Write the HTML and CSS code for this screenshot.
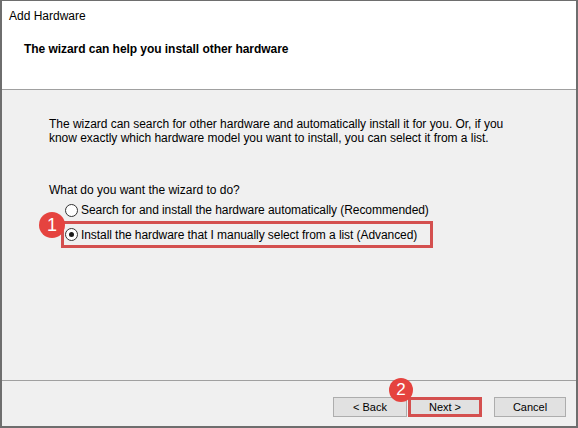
FILE: index.html
```html
<!DOCTYPE html>
<html lang="en">
<head>
    <meta charset="UTF-8">
    <meta name="viewport" content="width=device-width, initial-scale=1.0">
    <title>Add Hardware</title>
    <link rel="stylesheet" href="styles.css">
</head>
<body>
    <div class="window">
        <div class="header">
            <div class="caption">Add Hardware</div>
            <div class="heading">The wizard can help you install other hardware</div>
        </div>
        <div class="content">
            <p class="intro">The wizard can search for other hardware and automatically install it for you. Or, if you<br>know exactly which hardware model you want to install, you can select it from a list.</p>
            <p class="question">What do you want the wizard to do?</p>
            <div class="options">
                <div class="option"><span class="radio"></span>Search for and install the hardware automatically (Recommended)</div>
                <div class="option marked"><span class="radio checked"></span>Install the hardware that I manually select from a list (Advanced)<span class="badge one">1</span></div>
            </div>
        </div>
        <div class="footer">
            <button class="btn">&lt; Back</button>
            <button class="btn next">Next &gt;<span class="badge two">2</span></button>
            <button class="btn cancel">Cancel</button>
        </div>
    </div>
</body>
</html>
```

FILE: styles.css
```css
body {
    margin: 0;
    font-family: "Liberation Sans", Arial, sans-serif;
    font-size: 12px;
    color: #000;
}
.window {
    width: 578px;
    height: 428px;
    box-sizing: border-box;
    border: 2px solid #6e6e6e;
    border-top-width: 1px;
    background: #f0f0f0;
    display: flex;
    flex-direction: column;
}
.header {
    height: 89px;
    box-sizing: border-box;
    background: #fff;
    border-bottom: 1px solid #a0a0a0;
    padding: 7px 0 0 7px;
}
.caption {
    line-height: 16px;
}
.heading {
    font-weight: bold;
    line-height: 16px;
    letter-spacing: -0.05px;
    margin: 17px 0 0 15px;
}
.content {
    flex: 1;
    padding: 27px 0 0 47px;
}
.intro, .question {
    margin: 0;
    line-height: 14px;
}
.intro {
    letter-spacing: -0.03px;
}
.question {
    margin-top: 38px;
}
.options {
    margin-top: 2px;
}
.option {
    display: flex;
    align-items: center;
    width: fit-content;
    height: 22px;
    box-sizing: border-box;
    margin-left: 12px;
    border: 3px solid transparent;
    padding: 0 13px 0 1px;
    letter-spacing: -0.07px;
}
.option.marked {
    height: 27px;
    border-color: #d4504f;
    position: relative;
}
.radio {
    flex: none;
    width: 13px;
    height: 13px;
    box-sizing: border-box;
    border: 1px solid #333;
    border-radius: 50%;
    background: #fff;
    margin-right: 3px;
    position: relative;
}
.radio.checked::after {
    content: "";
    position: absolute;
    left: 3px;
    top: 3px;
    width: 5px;
    height: 5px;
    border-radius: 50%;
    background: #1a1a1a;
}
.badge {
    position: absolute;
    border-radius: 50%;
    background: #e5433f;
    color: #fff;
    text-align: center;
    letter-spacing: 0;
    font-family: "Liberation Sans", Arial, sans-serif;
}
.badge.one {
    width: 26px;
    height: 26px;
    line-height: 26px;
    font-size: 18px;
    left: -25px;
    top: -12px;
}
.badge.two {
    width: 24px;
    height: 24px;
    line-height: 24px;
    font-size: 17px;
    left: -22px;
    top: -22px;
}
.footer {
    height: 46px;
    box-sizing: border-box;
    border-top: 1px solid #a0a0a0;
    display: flex;
    justify-content: flex-end;
    align-items: flex-start;
    padding: 16px 10px 0 0;
}
.btn {
    width: 74px;
    height: 20px;
    padding: 0;
    background: #e1e1e1;
    border: 1px solid #adadad;
    color: #000;
    font-family: "Liberation Sans", Arial, sans-serif;
    font-size: 11px;
}
.btn.next {
    position: relative;
    margin-left: 1px;
    border: 3px solid #d4504f;
}
.btn.cancel {
    width: 72px;
    margin-left: 12px;
}
```
